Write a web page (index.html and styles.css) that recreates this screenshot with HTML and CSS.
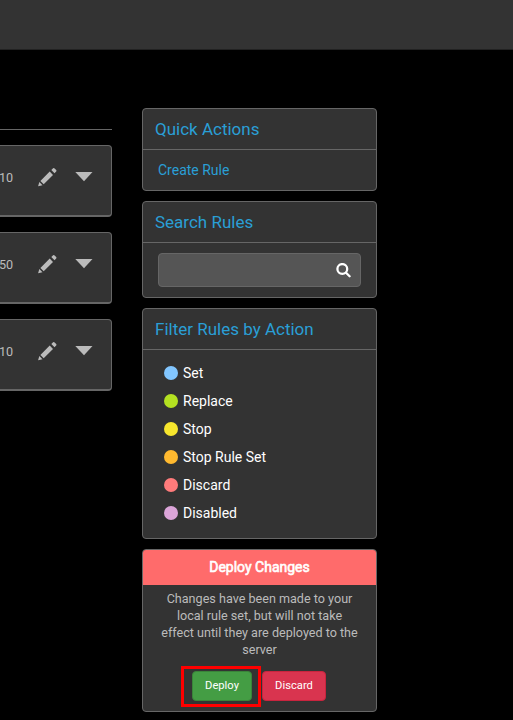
FILE: index.html
```html
<!DOCTYPE html>
<html lang="en">
<head>
<meta charset="utf-8">
<title>Rules</title>
<link rel="stylesheet" href="styles.css">
</head>
<body>
<svg class="defs" aria-hidden="true">
  <symbol id="pencil" viewBox="0 0 20 20">
    <path d="M1.1 19.2 2.3 14.9 5.5 18.2ZM3.4 13.9 12.7 4.6 16 7.9 6.7 17.2ZM14.3 3 16.1 1.2Q16.7.7 17.3 1.2L19.2 3.1Q19.8 3.7 19.2 4.4L17.5 6.2Z"/>
  </symbol>
</svg>
<header class="topbar"></header>
<div class="layout">
  <main class="rules">
    <article class="rule"><span class="count">10</span><svg class="pencil"><use href="#pencil"/></svg><svg class="caret" viewBox="0 0 18 10"><path d="M.3 0h17.2L9 9.3Z"/></svg></article>
    <article class="rule"><span class="count">50</span><svg class="pencil"><use href="#pencil"/></svg><svg class="caret" viewBox="0 0 18 10"><path d="M.3 0h17.2L9 9.3Z"/></svg></article>
    <article class="rule"><span class="count">10</span><svg class="pencil"><use href="#pencil"/></svg><svg class="caret" viewBox="0 0 18 10"><path d="M.3 0h17.2L9 9.3Z"/></svg></article>
  </main>
  <aside class="sidebar">
    <section class="panel">
      <h2>Quick Actions</h2>
      <div class="panel-body"><a class="link">Create Rule</a></div>
    </section>
    <section class="panel">
      <h2>Search Rules</h2>
      <div class="panel-body">
        <div class="search"><svg viewBox="0 0 15 15"><circle cx="6.3" cy="6" r="4.9"/><path d="M10 9.7 13.6 13.3"/></svg></div>
      </div>
    </section>
    <section class="panel">
      <h2>Filter Rules by Action</h2>
      <ul class="filters">
        <li><i class="dot set"></i>Set</li>
        <li><i class="dot replace"></i>Replace</li>
        <li><i class="dot stop"></i>Stop</li>
        <li><i class="dot stop-set"></i>Stop Rule Set</li>
        <li><i class="dot discard"></i>Discard</li>
        <li><i class="dot disabled"></i>Disabled</li>
      </ul>
    </section>
    <section class="panel deploy">
      <h3>Deploy Changes</h3>
      <p>Changes have been made to your local rule set, but will not take effect until they are deployed to the server</p>
      <div class="buttons">
        <span class="marked"><button class="btn go">Deploy</button></span>
        <button class="btn drop">Discard</button>
      </div>
    </section>
  </aside>
</div>
</body>
</html>
```

FILE: styles.css
```css
* { box-sizing: border-box; }
body { margin: 0; height: 720px; overflow: hidden; background: #000; color: #bbb; font-family: Roboto, "Liberation Sans", sans-serif; }
.defs { position: absolute; width: 0; height: 0; }
.topbar { height: 50px; background: #333; border-bottom: 1px solid #222; }
.layout { display: flex; align-items: flex-start; gap: 30px; padding-top: 58px; }
.rules { width: 112px; margin-top: 21px; padding-top: 15px; border-top: 1px solid #666; }
.rule { display: flex; height: 72px; margin-bottom: 15px; padding-top: 19px; background: #333; border: 1px solid #666; border-width: 1px 1px 2px 0; border-radius: 0 4px 4px 0; }
.count { width: 37px; margin-left: -1px; font-size: 12.6px; line-height: 26px; }
.pencil { width: 20px; height: 20px; margin-top: 2px; margin-left: 1px; fill: #bbb; }
.caret { width: 18px; height: 10px; margin: 7px 0 0 18px; fill: #bbb; }
.sidebar { width: 235px; display: flex; flex-direction: column; gap: 10px; }
.panel { background: #333; border: 1px solid #666; border-radius: 4px; overflow: hidden; }
h2 { margin: 0; height: 41px; padding-left: 12px; border-bottom: 1px solid #666; color: #2a9fd6; font-size: 17px; font-weight: 400; line-height: 40px; }
.panel-body { padding: 10px 15px; font-size: 14px; line-height: 20px; }
.link { color: #2a9fd6; }
.search { height: 34px; display: flex; align-items: center; justify-content: flex-end; padding-right: 9px; background: #555; border: 1px solid #666; border-radius: 4px; }
.search svg { width: 15px; height: 15px; fill: none; stroke: #fff; stroke-width: 2.3; stroke-linecap: round; }
.filters { margin: 0; padding: 9px 21px 11px; list-style: none; color: #fff; font-size: 14px; }
.filters li { display: flex; align-items: center; gap: 5px; height: 28px; }
.dot { width: 14px; height: 14px; border-radius: 50%; }
.set { background: #82c6ff; }
.replace { background: #b4e121; }
.stop { background: #f7e62d; }
.stop-set { background: #ffb92f; }
.discard { background: #ff7b7b; }
.disabled { background: #dca5d9; }
.deploy { height: 163px; text-align: center; }
h3 { margin: 0; height: 35px; background: #ff6b6b; color: #fff; font-size: 14px; line-height: 34px; font-weight: 400; -webkit-text-stroke: .6px #fff; }
.deploy p { margin: 5px auto 0; width: 199px; font-size: 12.6px; line-height: 17px; }
.buttons { display: flex; margin: 8px 0 0 38px; }
.marked { display: flex; width: 80px; height: 41px; padding: 2px 0 0 8px; border: 3px solid red; }
.btn { height: 30px; padding: 0; border-radius: 4px; color: #fff; font: 11.2px/28px Roboto, "Liberation Sans", sans-serif; }
.go { width: 60px; background: #449d44; border: 1px solid #398439; }
.drop { width: 64px; margin: 5px 0 0 1px; background: #d9344f; border: 1px solid #c9243e; }
```
